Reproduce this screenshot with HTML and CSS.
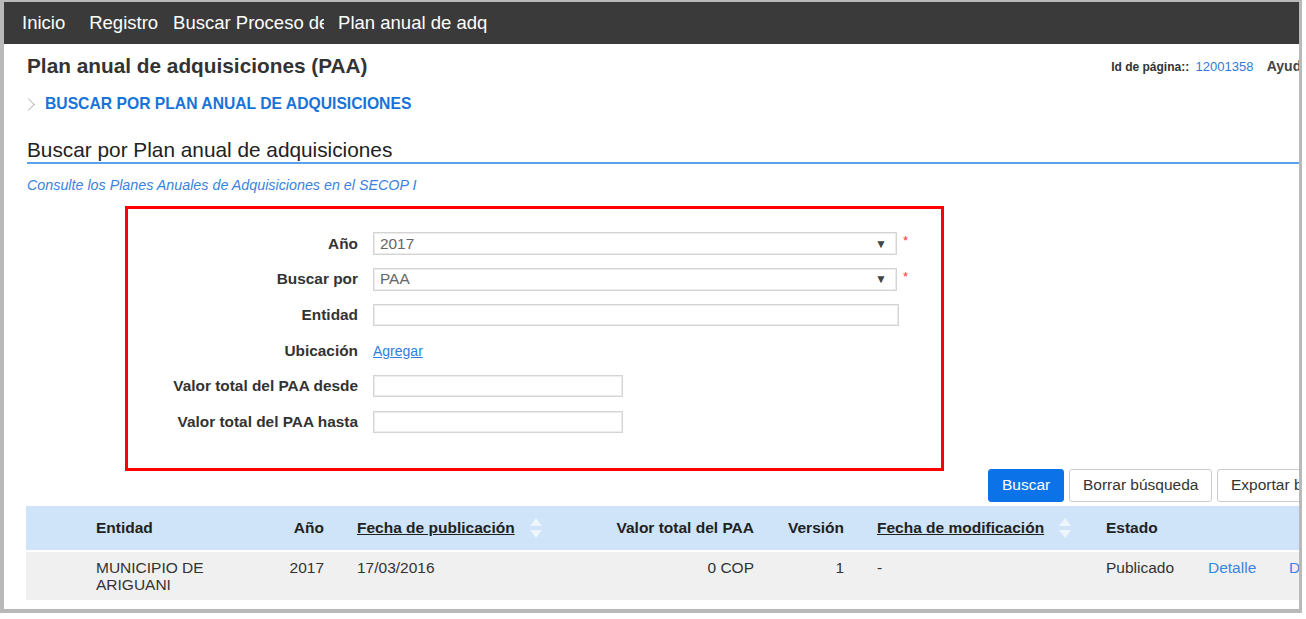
FILE: index.html
```html
<!DOCTYPE html>
<html lang="es">
<head>
    <meta charset="UTF-8">
    <meta name="viewport" content="width=device-width, initial-scale=1.0">
    <title>Plan anual de adquisiciones (PAA)</title>
    <link rel="stylesheet" href="styles.css">
</head>
<body>

<div class="frame">
    <nav class="topnav">
        <a class="nav-item">Inicio</a>
        <a class="nav-item short-gap">Registro</a>
        <a class="nav-item clip-1">Buscar Proceso de Contratación</a>
        <a class="nav-item clip-2">Plan anual de adquisiciones</a>
    </nav>

    <div class="page">
        <div class="page-head">
            <h1>Plan anual de adquisiciones (PAA)</h1>
            <div class="page-meta">
                <span class="meta-label">Id de página::</span>
                <span class="page-id">12001358</span>
                <span class="help">Ayuda</span>
            </div>
        </div>

        <div class="crumb">
            <span class="chev"></span>
            <a class="crumb-link">BUSCAR POR PLAN ANUAL DE ADQUISICIONES</a>
        </div>

        <h2 class="section-title">Buscar por Plan anual de adquisiciones</h2>
        <p class="hint">Consulte los Planes Anuales de Adquisiciones en el SECOP I</p>

        <div class="search-form">
            <label class="field-label">Año</label>
            <div class="field">
                <div class="select"><span>2017</span><span class="arrow">&#9660;</span></div>
                <span class="req">*</span>
            </div>

            <label class="field-label">Buscar por</label>
            <div class="field">
                <div class="select"><span>PAA</span><span class="arrow">&#9660;</span></div>
                <span class="req">*</span>
            </div>

            <label class="field-label">Entidad</label>
            <div class="field"><input class="text-input wide" type="text"></div>

            <label class="field-label">Ubicación</label>
            <div class="field"><a class="link" href="#">Agregar</a></div>

            <label class="field-label">Valor total del PAA desde</label>
            <div class="field"><input class="text-input short" type="text"></div>

            <label class="field-label">Valor total del PAA hasta</label>
            <div class="field"><input class="text-input short" type="text"></div>
        </div>

        <div class="actions">
            <button class="btn btn-primary">Buscar</button>
            <button class="btn btn-clear">Borrar búsqueda</button>
            <button class="btn btn-export">Exportar búsqueda</button>
        </div>

        <div class="results">
            <div class="results-row results-head">
                <div>Entidad</div>
                <div class="num">Año</div>
                <div class="pad"><span class="sortable">Fecha de publicación</span><svg class="sort" width="12" height="20" viewBox="0 0 12 20"><path d="M6 0 L12 8 L0 8 Z"/><path d="M0 12 L12 12 L6 20 Z"/></svg></div>
                <div class="num">Valor total del PAA</div>
                <div class="num">Versión</div>
                <div class="pad"><span class="sortable">Fecha de modificación</span><svg class="sort" width="12" height="20" viewBox="0 0 12 20"><path d="M6 0 L12 8 L0 8 Z"/><path d="M0 12 L12 12 L6 20 Z"/></svg></div>
                <div>Estado</div>
                <div></div>
                <div></div>
            </div>
            <div class="results-row results-item">
                <div>MUNICIPIO DE<br>ARIGUANI</div>
                <div class="num">2017</div>
                <div class="pad">17/03/2016</div>
                <div class="num">0 COP</div>
                <div class="num">1</div>
                <div class="pad">-</div>
                <div>Publicado</div>
                <div><a class="row-link" href="#">Detalle</a></div>
                <div><a class="row-link" href="#">Descargar</a></div>
            </div>
        </div>
    </div>

    <!-- recuadro de resaltado sobre el formulario -->
    <div class="highlight"></div>
</div>

</body>
</html>
```

FILE: styles.css
```css
body, html {
    margin: 0;
    padding: 0;
    background: #fff;
    font-family: "Liberation Sans", Arial, sans-serif;
}
.frame {
    position: relative;
    box-sizing: border-box;
    width: 1302px;
    height: 613px;
    border-style: solid;
    border-color: #b9b9b9;
    border-width: 2px 3px 4px 4px;
    overflow: hidden;
}
.topnav {
    height: 42px;
    background-color: #3a3a3a;
    display: flex;
    align-items: center;
    padding-left: 18px;
}
.nav-item {
    color: #fff;
    font-size: 18.5px;
    white-space: nowrap;
    margin-right: 24px;
}
.short-gap {
    margin-right: 15px;
}
.clip-1 {
    width: 151px;
    overflow: hidden;
    margin-right: 14px;
}
.clip-2 {
    width: 149px;
    overflow: hidden;
}
.page {
    padding-left: 23px;
}
.page-head {
    display: flex;
    align-items: center;
    margin-top: 10px;
    margin-right: -10px;
}
h1 {
    flex: 1;
    margin: 0;
    font-size: 20.8px;
    line-height: 24px;
    color: #333;
}
.page-meta {
    flex-shrink: 0;
    font-size: 12px;
    white-space: nowrap;
}
.meta-label {
    font-weight: bold;
    color: #333;
}
.page-id {
    color: #2f7bd6;
    font-size: 13px;
    margin-left: 3px;
}
.help {
    font-weight: bold;
    color: #444;
    font-size: 14px;
    margin-left: 10px;
}
.crumb {
    display: flex;
    align-items: center;
    margin-top: 17px;
    height: 18px;
}
.chev {
    width: 8px;
    height: 8px;
    border-top: 1px solid #bbb;
    border-right: 1px solid #bbb;
    transform: rotate(45deg);
    margin-left: -3px;
    margin-right: 12px;
}
.crumb-link {
    color: #1a73d9;
    font-weight: bold;
    font-size: 15.7px;
}
.section-title {
    margin: 25px 0 0 0;
    font-size: 20.8px;
    line-height: 24px;
    font-weight: normal;
    color: #222;
    border-bottom: 2px solid #5aa3ec;
}
.hint {
    margin: 13px 0 0 0;
    font-size: 14.3px;
    line-height: 16px;
    font-style: italic;
    color: #3b82e0;
}
.search-form {
    display: grid;
    grid-template-columns: 331px 1fr;
    grid-auto-rows: 35.6px;
    column-gap: 15px;
    margin-top: 33px;
}
.field-label {
    justify-self: end;
    align-self: center;
    font-weight: bold;
    font-size: 15.4px;
    color: #333;
}
.field {
    display: flex;
    align-items: center;
}
.select {
    box-sizing: border-box;
    width: 524px;
    height: 23px;
    border: 1px solid #d4d4d4;
    box-shadow: inset 0 0 0 1px #ececec;
    display: flex;
    align-items: center;
    justify-content: space-between;
    padding: 0 9px 0 6px;
    font-size: 15.4px;
    color: #666;
}
.arrow {
    font-size: 12px;
    color: #444;
}
.req {
    color: #f33;
    font-size: 13px;
    margin-left: 6px;
    align-self: flex-start;
    margin-top: 7px;
}
.text-input {
    box-sizing: border-box;
    height: 22px;
    border: 1px solid #d4d4d4;
    box-shadow: inset 0 0 0 1px #ececec;
    margin: 0;
    padding: 0 6px;
}
.wide {
    width: 526px;
}
.short {
    width: 250px;
}
.link {
    color: #2f7ee0;
    font-size: 14px;
}
.actions {
    display: flex;
    gap: 5px;
    justify-content: flex-end;
    margin-top: 29px;
    margin-right: -68px;
}
.btn {
    height: 33px;
    padding: 0;
    font-family: "Liberation Sans", Arial, sans-serif;
    font-size: 15.5px;
    color: #333;
    background: #fff;
    border: 1px solid #ccc;
    border-radius: 3px;
    text-align: left;
    padding-left: 13px;
}
.btn-primary {
    background: #0b72e7;
    border-color: #0b72e7;
    color: #fff;
    width: 76px;
}
.btn-clear {
    width: 143px;
}
.btn-export {
    width: 150px;
}
.results {
    margin-top: 4px;
    margin-left: -1px;
    font-size: 15.5px;
    color: #333;
}
.results-row {
    display: grid;
    grid-template-columns: 193px 35px 266px 164px 90px 262px 102px 81px 1fr;
    padding-left: 70px;
    white-space: nowrap;
}
.results-head {
    height: 44px;
    align-items: center;
    background: #cfe4f8;
    font-weight: bold;
    color: #222;
}
.results-item {
    margin-top: 2px;
    height: 48px;
    box-sizing: border-box;
    padding-top: 7px;
    line-height: 17px;
    background: #f0f0f0;
}
.num {
    text-align: right;
}
.pad {
    padding-left: 33px;
    display: flex;
    align-items: center;
    align-self: stretch;
}
.results-item .pad {
    display: block;
}
.sortable {
    text-decoration: underline;
}
.sort {
    margin-left: 15px;
    fill: #eef5fc;
}
.row-link {
    color: #3a86e0;
    text-decoration: none;
}
.highlight {
    position: absolute;
    left: 121px;
    top: 204px;
    width: 819px;
    height: 265px;
    box-sizing: border-box;
    border: 3px solid #ff0000;
}
```
